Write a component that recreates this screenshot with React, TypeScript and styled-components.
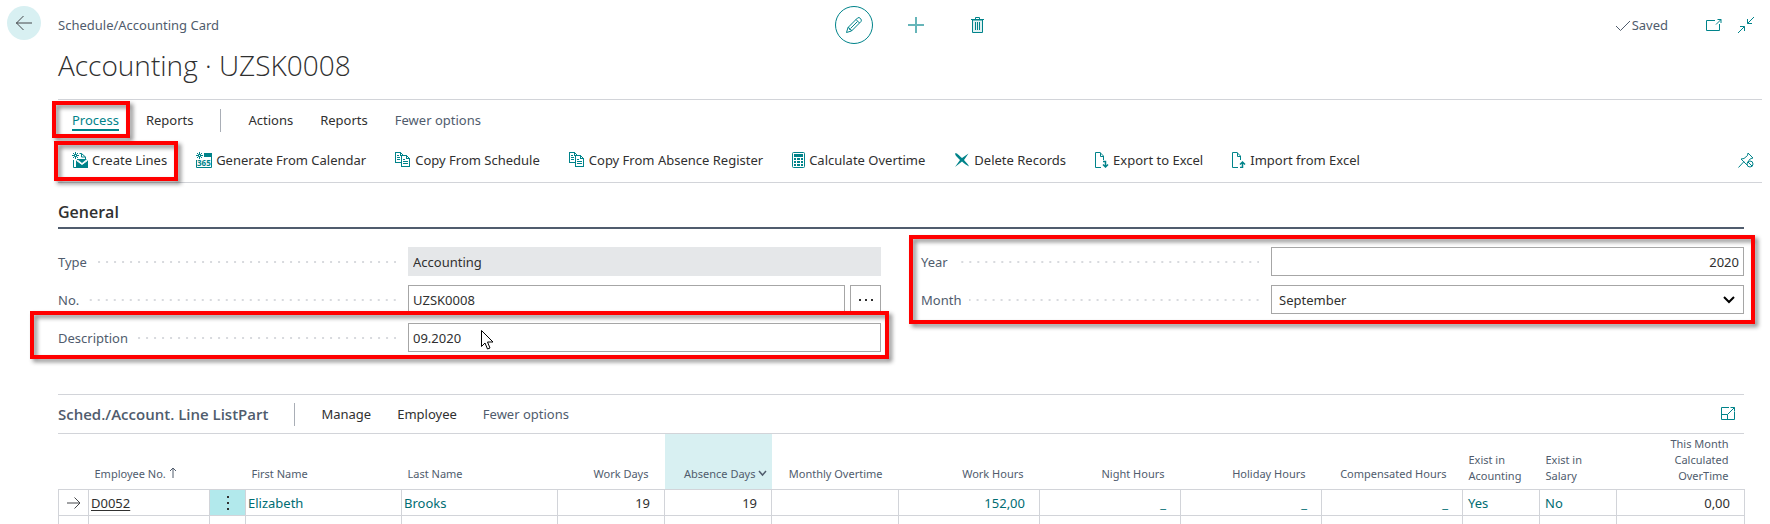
import React, { useState } from "react";
import styled, { createGlobalStyle, css } from "styled-components";

const teal = "#00838a";
const slate = "#505c6d";
const ink = "#303030";
const rule = "#d2d4d9";
const headingFont = '"Open Sans", sans-serif';

const GlobalStyle = createGlobalStyle`
  * { box-sizing: border-box; }
  body {
    margin: 0;
    background: #fff;
    color: ${ink};
    font-family: "Noto Sans", "Open Sans", sans-serif;
    font-size: 13px;
    line-height: 20px;
    overflow-x: hidden;
  }
  button, input, select { font: inherit; color: inherit; margin: 0; }
  button { background: none; border: 0; padding: 0; cursor: pointer; }
  h1, h2, h3 { margin: 0; }
  svg { display: block; flex: none; }
`;

const Page = styled.div`
  display: grid;
  grid-template-columns: 58px minmax(0, 1fr);
  padding-right: 8px;
`;

const Rail = styled.nav`
  padding: 6px 0 0 7px;
`;

const BackButton = styled.button`
  display: grid;
  place-items: center;
  width: 34px;
  height: 34px;
  border-radius: 50%;
  background: #d8f0f2;
`;

const TopBar = styled.header`
  display: grid;
  grid-template-columns: 1fr auto 1fr;
  align-items: center;
  padding-top: 6px;
`;

const Breadcrumb = styled.span`
  color: ${slate};
`;

const PageTools = styled.div`
  display: flex;
  gap: 24px;
  padding-left: 12px;
`;

const RoundButton = styled.button<{ $ring?: boolean }>`
  display: grid;
  place-items: center;
  width: 38px;
  height: 38px;
  border-radius: 50%;
  border: 1px solid ${(p) => (p.$ring ? teal : "transparent")};
`;

const StatusArea = styled.div`
  display: flex;
  align-items: center;
  justify-content: flex-end;
  gap: 16px;
  padding-right: 8px;
  color: ${slate};
`;

const Saved = styled.span`
  display: flex;
  align-items: center;
  gap: 1px;
  margin-right: 22px;
`;

const Title = styled.h1`
  padding: 1px 0 14px;
  font-family: ${headingFont};
  font-size: 28px;
  font-weight: 300;
  line-height: 40px;
`;

const Ribbon = styled.section`
  border: solid ${rule};
  border-width: 1px 0;
`;

const Tabs = styled.div`
  display: flex;
  align-items: center;
  gap: 27px;
  height: 40px;
  padding-left: 14px;
`;

const Divider = styled.span`
  width: 1px;
  height: 23px;
  background: #a9aeb6;
`;

const Marked = styled.span`
  position: relative;
  display: inline-flex;
`;

const Frame = styled.span<{ $inset: string }>`
  position: absolute;
  inset: ${(p) => p.$inset};
  z-index: 2;
  border: 4px solid #f00;
  filter: drop-shadow(3px 3px 2px rgba(0, 0, 0, 0.45));
  pointer-events: none;
`;

const Tab = styled.button<{ $active?: boolean; $muted?: boolean }>`
  color: ${(p) => (p.$active ? teal : p.$muted ? slate : ink)};
  white-space: nowrap;
  ${(p) => p.$active && css`box-shadow: 0 1px ${teal}, inset 0 -1px ${teal};`}
`;

const Actions = styled.div`
  display: flex;
  align-items: center;
  gap: 29px;
  height: 42px;
  padding: 0 8px 2px 14px;
`;

const Action = styled.button`
  display: flex;
  align-items: center;
  gap: 4px;
  white-space: nowrap;
`;

const PinButton = styled.button`
  margin-left: auto;
`;

const Body = styled.main`
  padding-right: 18px;
`;

const SectionTitle = styled.h2`
  margin-top: 17px;
  padding-bottom: 3px;
  border-bottom: 2px solid ${slate};
  font-family: ${headingFont};
  font-size: 16px;
  font-weight: 600;
  line-height: 24px;
`;

const Fields = styled.div`
  display: grid;
  grid-template-columns: 1fr 1fr;
  column-gap: 40px;
  padding: 18px 0 42px;
`;

const FieldColumn = styled.div`
  display: flex;
  flex-direction: column;
  gap: 9px;
`;

const FieldGroup = styled(FieldColumn)`
  position: relative;
`;

const FieldRow = styled.div`
  position: relative;
  display: grid;
  grid-template-columns: 350px minmax(0, 1fr);
  align-items: center;
`;

const Label = styled.label`
  display: flex;
  align-items: center;
  padding-right: 12px;
  color: ${slate};

  &::after {
    content: "";
    flex: 1;
    height: 2px;
    margin-left: 8px;
    background: linear-gradient(to right, transparent 6px, #d8dade 6px) right center / 8px 2px repeat-x;
  }
`;

const Control = styled.div`
  position: relative;
  display: flex;
  gap: 5px;
`;

const box = css`
  flex: 1;
  min-width: 0;
  height: 29px;
  border: 1px solid #a6a6a6;
  border-radius: 0;
  background: #fff;
`;

const Input = styled.input<{ $numeric?: boolean }>`
  ${box}
  padding: 0 4px;
  text-align: ${(p) => (p.$numeric ? "right" : "left")};

  &:read-only {
    border-color: #e5e7e9;
    background: #e5e7e9;
  }
`;

const Select = styled.select`
  ${box}
  padding: 0 7px;
  appearance: none;
`;

const SelectArrow = styled.svg`
  position: absolute;
  right: 8px;
  top: 10px;
  pointer-events: none;
`;

const LookupButton = styled.button`
  display: grid;
  place-items: center;
  flex: none;
  width: 31px;
  height: 29px;
  border: 1px solid #a6a6a6;
`;

const Pointer = styled.svg`
  position: absolute;
  left: 73px;
  top: 7px;
  z-index: 3;
  pointer-events: none;
`;

const PartBar = styled.div`
  display: flex;
  align-items: center;
  gap: 26px;
  height: 40px;
  padding-right: 8px;
  border: solid ${rule};
  border-width: 1px 0;
`;

const PartTitle = styled.h3`
  color: ${slate};
  font-family: ${headingFont};
  font-size: 15px;
  font-weight: 600;
`;

const ExpandButton = styled.button`
  margin-left: auto;
`;

const Grid = styled.table`
  width: 100%;
  table-layout: fixed;
  border-collapse: collapse;
`;

const HeadCell = styled.th<{ $right?: boolean; $selected?: boolean; $wrap?: boolean }>`
  position: relative;
  height: 55px;
  padding: ${(p) => (p.$right ? "2px 16px 5px 4px" : "2px 6px 5px")};
  vertical-align: bottom;
  text-align: ${(p) => (p.$right ? "right" : "left")};
  color: ${slate};
  background: ${(p) => (p.$selected ? "#d8f0f2" : "none")};
  font-size: 11px;
  font-weight: 400;
  line-height: ${(p) => (p.$wrap ? "16px" : "20px")};
  white-space: ${(p) => (p.$wrap ? "normal" : "nowrap")};

  svg { display: inline-block; }
`;

const FilterArrow = styled.svg`
  position: absolute;
  right: 5px;
  bottom: 12px;
`;

const Cell = styled.td<{ $right?: boolean; $pad?: number; $link?: boolean; $marked?: boolean }>`
  height: 26px;
  padding: ${(p) => (p.$right ? "0 14px 0 0" : `0 0 0 ${p.$pad ?? 2}px`)};
  border: 1px solid ${rule};
  text-align: ${(p) => (p.$right ? "right" : "left")};
  color: ${(p) => (p.$link ? "#006d73" : ink)};
  background: ${(p) => (p.$marked ? "#b2e9ec" : "none")};
`;

const RecordLink = styled.a`
  color: ${ink};
  text-underline-offset: 2px;
`;

const RowMenu = styled.button`
  display: grid;
  place-items: center;
  width: 100%;
`;

type IconProps = { children: React.ReactNode; size?: number; crisp?: boolean; color?: string };

function Icon({ children, size = 16, crisp, color = teal }: IconProps) {
  return (
    <svg
      width={size}
      height={size}
      viewBox={`0 0 ${size} ${size}`}
      fill="none"
      stroke={color}
      shapeRendering={crisp ? "crispEdges" : "auto"}
      aria-hidden="true"
    >
      {children}
    </svg>
  );
}

const Spark = () => (
  <g>
    <path d="M3.5 0v2M3.5 5v2M0 3.5h2M5 3.5h2M1 1l1.500 1.500M4.500 4.500L6 6M6 1L4.500 2.500M2.500 4.500L1 6" />
    <path d="M2.500 2.500h2v2h-2z" />
  </g>
);

const CreateLinesIcon = () => (
  <Icon>
    <Spark />
    <path d="M1.500 8v7.500H4M7.500 1.500h2L13.500 5v2.500M9.500 1.500v3.500h4M5 7.500h5" />
    <path d="M4 8l6 4.500L16 8v8H4z" fill={teal} stroke="none" />
    <path d="M5 7h10l-5 4z" fill={teal} stroke="none" />
    <path d="M4.500 8.500l5.500 4L15.500 8.500" stroke="#fff" />
  </Icon>
);

const CalendarIcon = () => (
  <Icon>
    <Spark />
    <path d="M8 1h8v4H8z" fill={teal} stroke="none" />
    <path d="M0.500 8v7.500h15V5" />
    <text x="1" y="14" fontSize="8" fontWeight="700" fill={teal} stroke="none">365</text>
  </Icon>
);

const CopyIcon = () => (
  <Icon crisp>
    <path d="M6 10.500H0.500v-10H5.500L8 3M5.500 1v2.500M2 3.500h2M2 5.500h3M2 7.500h3" />
    <path d="M6.500 3.500h5L14.500 6.500v7.500h-8zM11.500 4v2.500h3M8 7.500h2M8 9.500h5M8 11.500h5" />
  </Icon>
);

const CalculatorIcon = () => (
  <svg width="13" height="16" viewBox="0 0 13 16" aria-hidden="true">
    <rect x="0.500" y="0.500" width="12" height="15" rx="1" fill="none" stroke={teal} />
    <path
      d="M2 2h9v3H2zM2 6h2v2H2zM5 6h3v2H5zM9 6h2v2H9zM2 9h2v2H2zM5 9h3v2H5zM9 9h2v2H9zM2 12h2v2H2zM5 12h3v2H5zM9 12h2v2H9z"
      fill={teal}
      shapeRendering="crispEdges"
    />
  </svg>
);

const DeleteIcon = () => (
  <Icon>
    <path d="M1 1.500C2 0.500 3.500 1.500 8 6L14.500 1.500 10 8c2 2.500 4 4 5 6.500C12 13 10.500 11.500 8 9.500L1 15 6 8C3 5 1.500 4 1 1.500z" fill={teal} stroke="none" />
  </Icon>
);

const SheetIcon = ({ up }: { up?: boolean }) => (
  <svg width="14" height="16" viewBox="0 0 14 16" fill="none" stroke={teal} aria-hidden="true">
    <path d="M6 15.500H0.500v-15H5L8.500 4V8M5.500 0.500V4.500H8.500" />
    {up ? (
      <path d="M8 15.500h2.500V10M8 12.500L10.500 10l2.500 2.500" strokeWidth="1.500" />
    ) : (
      <path d="M8 9.500h2.500V15M8 12.500L10.500 15l2.500-2.500" strokeWidth="1.500" />
    )}
  </svg>
);

const PinIcon = () => (
  <Icon>
    <path d="M10 1l5 5-2 .5-2.500 2M10 1l-.5 2.500L6 6.500 3 7l6 6M6 9.500L0.500 15.500" />
    <circle cx="12" cy="12" r="3" fill="#fff" />
    <path d="M10 10l4 4" />
  </Icon>
);

const columns: { title?: React.ReactNode; width: number; right?: boolean; wrap?: boolean; selected?: boolean }[] = [
  { width: 30 },
  {
    width: 121,
    title: (
      <>
        Employee No.{" "}
        <svg width="8" height="11" viewBox="0 0 8 11" fill="none" stroke={slate} aria-hidden="true">
          <path d="M4 11V1M1 4l3-3 3 3" />
        </svg>
      </>
    ),
  },
  { width: 36 },
  { width: 156, title: "First Name" },
  { width: 156, title: "Last Name" },
  { width: 107, title: "Work Days", right: true },
  { width: 107, title: "Absence Days", right: true, selected: true },
  { width: 127, title: "Monthly Overtime", right: true },
  { width: 141, title: "Work Hours", right: true },
  { width: 141, title: "Night Hours", right: true },
  { width: 141, title: "Holiday Hours", right: true },
  { width: 141, title: "Compensated Hours", right: true },
  { width: 77, title: <>Exist in<br />Acounting</>, wrap: true },
  { width: 77, title: <>Exist in<br />Salary</>, wrap: true },
  { width: 128, title: <>This Month<br />Calculated<br />OverTime</>, right: true, wrap: true },
];

export default function App() {
  const [description, setDescription] = useState("09.2020");
  const [number, setNumber] = useState("UZSK0008");
  const [year, setYear] = useState("2020");

  return (
    <>
      <GlobalStyle />
      <Page>
        <Rail>
          <BackButton aria-label="Back">
            <Icon color="#45474a"><path d="M0 8h16M7.500 1L0.500 8l7 7" /></Icon>
          </BackButton>
        </Rail>
        <div>
          <TopBar>
            <Breadcrumb>Schedule/Accounting Card</Breadcrumb>
            <PageTools>
              <RoundButton $ring aria-label="Edit">
                <Icon>
                  <path d="M0.500 15.500l1.500-5L11.500 1Q13-.2 14.500 1.500T15 4.500L5.500 14zM10 2.500l3.500 3.500M2 10.500q2 0 1.500 2 2-.5 2 1.500M11.500 4.500l-7 7" />
                </Icon>
              </RoundButton>
              <RoundButton aria-label="New">
                <Icon><path d="M8 0v16M0 8h16" strokeWidth="2" opacity=".6" /></Icon>
              </RoundButton>
              <RoundButton aria-label="Delete">
                <Icon>
                  <path d="M2.500 3v12.500h10V3z" fill="#e0f2f3" />
                  <path d="M1 2.500h13M5.500 2V.5h4V2M5.500 5v8M7.500 5v8M9.500 5v8" />
                </Icon>
              </RoundButton>
            </PageTools>
            <StatusArea>
              <Saved>
                <Icon color={slate}><path d="M1 9l4.500 4.500L15 4" /></Icon>
                Saved
              </Saved>
              <button aria-label="Open in new window">
                <Icon><path d="M9 3.500H.5v10h13V7M10 7.500l5-5M11.500 2.500H15V6" /></Icon>
              </button>
              <button aria-label="Collapse">
                <Icon><path d="M16 0L9.500 6.500M9.500 2v4.500H14M0 16l6.500-6.500M2 9.500h4.500V14" /></Icon>
              </button>
            </StatusArea>
          </TopBar>
          <Title>Accounting · UZSK0008</Title>

          <Ribbon>
            <Tabs>
              <Marked>
                <Tab $active>Process</Tab>
                <Frame $inset="-9px -11px -8px -20px" />
              </Marked>
              <Tab>Reports</Tab>
              <Divider />
              <Tab>Actions</Tab>
              <Tab>Reports</Tab>
              <Tab $muted>Fewer options</Tab>
            </Tabs>
            <Actions>
              <Marked>
                <Action><CreateLinesIcon />Create Lines</Action>
                <Frame $inset="-9px -11px -11px -18px" />
              </Marked>
              <Action><CalendarIcon />Generate From Calendar</Action>
              <Action><CopyIcon />Copy From Schedule</Action>
              <Action><CopyIcon />Copy From Absence Register</Action>
              <Action><CalculatorIcon />Calculate Overtime</Action>
              <Action><DeleteIcon />Delete Records</Action>
              <Action><SheetIcon />Export to Excel</Action>
              <Action><SheetIcon up />Import from Excel</Action>
              <PinButton aria-label="Unpin"><PinIcon /></PinButton>
            </Actions>
          </Ribbon>

          <Body>
            <SectionTitle>General</SectionTitle>
            <Fields>
              <FieldColumn>
                <FieldRow>
                  <Label htmlFor="type">Type</Label>
                  <Control><Input id="type" value="Accounting" readOnly /></Control>
                </FieldRow>
                <FieldRow>
                  <Label htmlFor="number">No.</Label>
                  <Control>
                    <Input id="number" value={number} onChange={(e) => setNumber(e.target.value)} />
                    <LookupButton aria-label="Look up number">
                      <Icon color="none"><path d="M1 7h2v2H1zM7 7h2v2H7zM13 7h2v2h-2z" fill={ink} /></Icon>
                    </LookupButton>
                  </Control>
                </FieldRow>
                <FieldRow>
                  <Label htmlFor="description">Description</Label>
                  <Control>
                    <Input id="description" value={description} onChange={(e) => setDescription(e.target.value)} />
                    <Pointer width="13" height="20" viewBox="0 0 13 20" aria-hidden="true">
                      <path d="M.5.5v16l3.500-3.500 2.500 6 2.500-1-2.500-6H12z" fill="#fff" stroke="#000" />
                    </Pointer>
                  </Control>
                  <Frame $inset="-12px -8px -7px -28px" />
                </FieldRow>
              </FieldColumn>
              <div>
                <FieldGroup>
                  <FieldRow>
                    <Label htmlFor="year">Year</Label>
                    <Control>
                      <Input id="year" $numeric value={year} onChange={(e) => setYear(e.target.value)} />
                    </Control>
                  </FieldRow>
                  <FieldRow>
                    <Label htmlFor="month">Month</Label>
                    <Control>
                      <Select id="month" defaultValue="September">
                        <option>August</option>
                        <option>September</option>
                        <option>October</option>
                      </Select>
                      <SelectArrow width="14" height="10" viewBox="0 0 14 10" fill="none" stroke="#000" strokeWidth="2" aria-hidden="true">
                        <path d="M2 2l5 5 5-5" />
                      </SelectArrow>
                    </Control>
                  </FieldRow>
                  <Frame $inset="-12px -11px -10px -12px" />
                </FieldGroup>
              </div>
            </Fields>

            <PartBar>
              <PartTitle>Sched./Account. Line ListPart</PartTitle>
              <Divider />
              <Tab>Manage</Tab>
              <Tab>Employee</Tab>
              <Tab $muted>Fewer options</Tab>
              <ExpandButton aria-label="Expand list">
                <Icon><path d="M9 1.500H1.500v12h13V6M1.500 8.500h6v5M7.500 8.500l7-7M10.500 1.500h4v4" /></Icon>
              </ExpandButton>
            </PartBar>

            <Grid>
              <colgroup>
                {columns.map((c, i) => <col key={i} width={c.width} />)}
              </colgroup>
              <thead>
                <tr>
                  {columns.map((c, i) => (
                    <HeadCell key={i} scope="col" $right={c.right} $selected={c.selected} $wrap={c.wrap}>
                      {c.title}
                      {c.selected && (
                        <FilterArrow width="9" height="7" viewBox="0 0 9 7" fill="none" stroke={slate} strokeWidth="1.500" aria-hidden="true">
                          <path d="M1 1l3.500 4L8 1" />
                        </FilterArrow>
                      )}
                    </HeadCell>
                  ))}
                </tr>
              </thead>
              <tbody>
                <tr>
                  <Cell $pad={8}>
                    <Icon size={14} color="#45474a"><path d="M0 7h13M7.500 1.500L13 7l-5.500 5.500" /></Icon>
                  </Cell>
                  <Cell><RecordLink href="#D0052">D0052</RecordLink></Cell>
                  <Cell $pad={0} $marked>
                    <RowMenu aria-label="Row menu">
                      <Icon color="none"><path d="M7 1h2v2H7zM7 7h2v2H7zM7 13h2v2H7z" fill={ink} /></Icon>
                    </RowMenu>
                  </Cell>
                  <Cell $link>Elizabeth</Cell>
                  <Cell $link>Brooks</Cell>
                  <Cell $right>19</Cell>
                  <Cell $right>19</Cell>
                  <Cell />
                  <Cell $right $link>152,00</Cell>
                  <Cell $right $link>_</Cell>
                  <Cell $right $link>_</Cell>
                  <Cell $right $link>_</Cell>
                  <Cell $pad={5} $link>Yes</Cell>
                  <Cell $pad={5} $link>No</Cell>
                  <Cell $right>0,00</Cell>
                </tr>
                <tr>
                  {columns.map((_, i) => <Cell key={i} />)}
                </tr>
              </tbody>
            </Grid>
          </Body>
        </div>
      </Page>
    </>
  );
}
